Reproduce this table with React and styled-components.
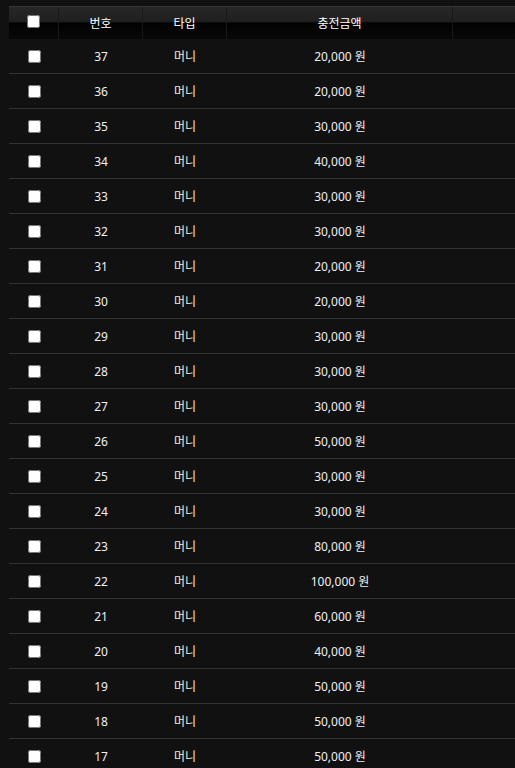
import React from "react";
import styled, { createGlobalStyle } from "styled-components";

const GlobalStyle = createGlobalStyle`
  html, body {
    margin: 0;
    padding: 0;
    background: #111111;
    overflow: hidden;
  }
  body {
    font-family: "Noto Sans", "Noto Sans CJK KR", sans-serif;
    font-size: 12px;
    color: #f2f2f2;
  }
`;

const Wrapper = styled.div`
  padding: 6px 0 0 9px;
`;

const cols = "50px 84px 84px 226px 1fr";

const HeadRow = styled.div`
  display: grid;
  grid-template-columns: ${cols};
  height: 32px;
  border-top: 1px solid #353535;
  background: linear-gradient(
    to bottom,
    #272727 0%,
    #1f1f1f 47%,
    #020202 49%,
    #080808 100%
  );
`;

const HeadCell = styled.div`
  display: flex;
  align-items: center;
  justify-content: center;
  border-right: 1px solid #181818;
  color: #ffffff;
  font-size: 12px;
  padding-bottom: 1px;
  box-sizing: border-box;
  &:last-child {
    border-right: none;
  }
`;

const Row = styled.div`
  display: grid;
  grid-template-columns: ${cols};
  height: 34px;
  border-bottom: 1px solid #333333;
`;

const Cell = styled.div`
  display: flex;
  align-items: center;
  justify-content: center;
  color: ${(p) => p.$color || "#f0f0f0"};
`;

const Check = styled.input.attrs({ type: "checkbox" })`
  width: 13px;
  height: 13px;
  margin: 0;
`;

const HeadCheck = styled(Check)`
  margin-top: -2px;
`;

const rows = [
  [37, 20000],
  [36, 20000],
  [35, 30000],
  [34, 40000],
  [33, 30000],
  [32, 30000],
  [31, 20000],
  [30, 20000],
  [29, 30000],
  [28, 30000],
  [27, 30000],
  [26, 50000],
  [25, 30000],
  [24, 30000],
  [23, 80000],
  [22, 100000],
  [21, 60000],
  [20, 40000],
  [19, 50000],
  [18, 50000],
  [17, 50000],
];

export default function App() {
  return (
    <>
      <GlobalStyle />
      <Wrapper>
        <HeadRow>
          <HeadCell>
            <HeadCheck />
          </HeadCell>
          <HeadCell>번호</HeadCell>
          <HeadCell>타입</HeadCell>
          <HeadCell>충전금액</HeadCell>
          <HeadCell />
        </HeadRow>
        {rows.map(([no, amount]) => (
          <Row key={no}>
            <Cell>
              <Check />
            </Cell>
            <Cell>{no}</Cell>
            <Cell $color="#f3ecd8">머니</Cell>
            <Cell>{amount.toLocaleString("en-US")} 원</Cell>
            <Cell />
          </Row>
        ))}
      </Wrapper>
    </>
  );
}
